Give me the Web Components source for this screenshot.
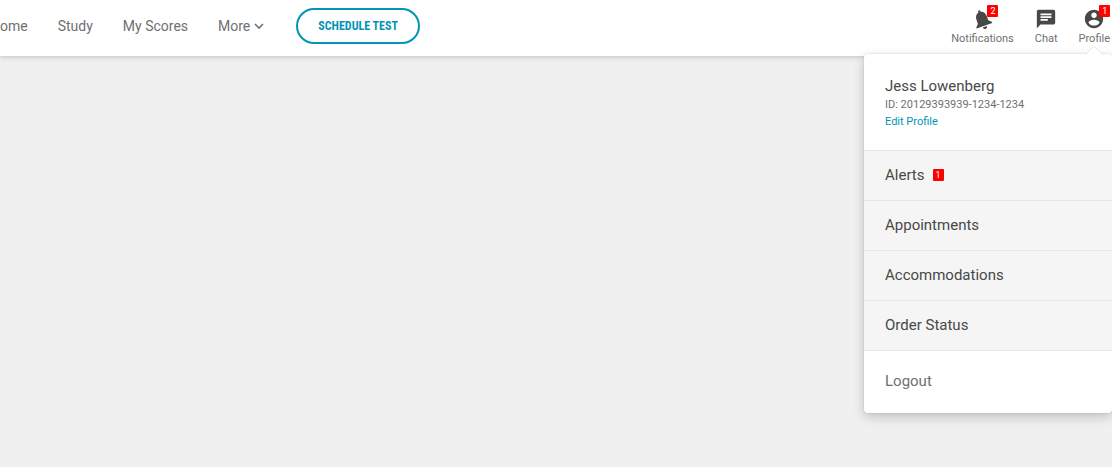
<!DOCTYPE html>
<html lang="en">
<head>
<meta charset="utf-8">
<meta name="viewport" content="width=device-width, initial-scale=1">
<title>My Account</title>
<style>
  body {
    margin: 0;
    min-height: 100vh;
    overflow-x: hidden;
    background: #f0f0f0;
    color: #707070;
    font-family: Roboto, "Liberation Sans", sans-serif;
  }
</style>
</head>
<body>
<site-header>
  <nav-link href="#home">Home</nav-link>
  <nav-link href="#study">Study</nav-link>
  <nav-link href="#scores">My Scores</nav-link>
  <nav-more>More</nav-more>
  <pill-button>Schedule Test</pill-button>

  <header-action slot="actions" icon="bell" count="2">Notifications</header-action>
  <header-action slot="actions" icon="chat">Chat</header-action>
  <header-action slot="actions" icon="person" count="1">Profile</header-action>

  <profile-menu slot="menu" name="Jess Lowenberg" user-id="20129393939-1234-1234">
    <menu-item href="#alerts" count="1">Alerts</menu-item>
    <menu-item href="#appointments">Appointments</menu-item>
    <menu-item href="#accommodations">Accommodations</menu-item>
    <menu-item href="#orders">Order Status</menu-item>
    <a slot="footer" href="#logout">Logout</a>
  </profile-menu>
</site-header>

<script>
const icons = {
  bell: `<g transform="rotate(-20 12 12)"><path d="M12 23.500a2.400 2.400 0 0 0 2.400-2.400H9.600a2.400 2.400 0 0 0 2.400 2.400zM18 15.500V11c0-3.500-1.700-6.200-4.700-6.900V3.300a1.300 1.300 0 0 0-2.600 0v.8C7.700 4.800 6 7.500 6 11v4.500l-3 3v1.300h18v-1.300z"/></g>`,
  chat: `<path d="M20 2H4c-1.100 0-2 .9-2 2v18l4-4h14c1.100 0 2-.9 2-2V4c0-1.100-.9-2-2-2zM6 9h12v2H6V9zm8 5H6v-2h8v2zm4-6H6V6h12v2z"/>`,
  person: `<path d="M12 2C6.480 2 2 6.480 2 12s4.480 10 10 10 10-4.480 10-10S17.520 2 12 2zm0 3c1.660 0 3 1.340 3 3s-1.340 3-3 3-3-1.340-3-3 1.340-3 3-3zm0 14.200c-2.500 0-4.710-1.280-6-3.220.03-1.990 4-3.080 6-3.080 1.990 0 5.970 1.090 6 3.080-1.290 1.940-3.500 3.220-6 3.220z"/>`
};

class SiteHeader extends HTMLElement {
  constructor() {
    super();
    this.attachShadow({mode: 'open'}).innerHTML = `
      <style>
        :host { display: block; position: relative; }

        header {
          display: flex;
          align-items: center;
          justify-content: space-between;
          height: 56px;
          background: #fff;
          box-shadow: 0 1px 5px rgba(0, 0, 0, .2);
        }

        nav {
          display: flex;
          align-items: center;
          gap: 30px;
          /* the bar runs on past the left edge of the window */
          margin-left: -10px;
          padding-bottom: 4px;
        }

        .actions {
          display: flex;
          gap: 21px;
          padding: 0 2px 3px 0;
        }
      </style>
      <header>
        <nav><slot></slot></nav>
        <div class="actions"><slot name="actions"></slot></div>
      </header>
      <slot name="menu"></slot>
    `;
  }
}

class NavLink extends HTMLElement {
  constructor() {
    super();
    this.attachShadow({mode: 'open'}).innerHTML = `
      <style>
        :host { display: block; font-size: 14px; line-height: 20px; }
        a { color: inherit; text-decoration: none; white-space: nowrap; }
      </style>
      <a><slot></slot></a>
    `;
  }

  connectedCallback() {
    this.shadowRoot.querySelector('a').href = this.getAttribute('href');
  }
}

class NavMore extends HTMLElement {
  constructor() {
    super();
    this.attachShadow({mode: 'open'}).innerHTML = `
      <style>
        :host { display: block; }

        button {
          display: flex;
          align-items: center;
          gap: 4px;
          padding: 0;
          border: none;
          background: none;
          color: inherit;
          font: inherit;
          font-size: 14px;
          line-height: 20px;
          cursor: pointer;
        }
      </style>
      <button type="button" aria-haspopup="true">
        <slot></slot>
        <svg width="10" height="8" viewBox="0 0 10 8" aria-hidden="true">
          <path d="M1 2l4 4 4-4" fill="none" stroke="currentColor" stroke-width="1.600"/>
        </svg>
      </button>
    `;
  }
}

class PillButton extends HTMLElement {
  constructor() {
    super();
    this.attachShadow({mode: 'open'}).innerHTML = `
      <style>
        :host { display: block; margin-left: 2px; }

        button {
          height: 36px;
          padding: 0 20px;
          border: 2px solid #0095b6;
          border-radius: 18px;
          background: #fff;
          color: #0095b6;
          font: bold 12px/16px "Roboto Condensed", "Liberation Sans Narrow", Roboto, sans-serif;
          text-transform: uppercase;
          white-space: nowrap;
          cursor: pointer;
        }
      </style>
      <button type="button"><slot></slot></button>
    `;
  }
}

class CountBadge extends HTMLElement {
  constructor() {
    super();
    this.attachShadow({mode: 'open'}).innerHTML = `
      <style>
        :host {
          display: block;
          min-width: 11px;
          border-radius: 1px;
          background: #f00;
          color: #fff;
          font-size: 9px;
          line-height: 12px;
          text-align: center;
        }
      </style>
      <slot></slot>
    `;
  }
}

class HeaderAction extends HTMLElement {
  constructor() {
    super();
    this.attachShadow({mode: 'open'}).innerHTML = `
      <style>
        :host { display: block; }

        button {
          display: flex;
          flex-direction: column;
          align-items: center;
          gap: 2px;
          padding: 0;
          border: none;
          background: none;
          color: inherit;
          font: inherit;
          font-size: 11px;
          line-height: 14px;
          cursor: pointer;
        }

        .icon { position: relative; height: 22px; }
        svg { display: block; fill: #484848; }
        count-badge { position: absolute; top: -3px; right: -5px; }
      </style>
      <button type="button">
        <span class="icon"></span>
        <slot></slot>
      </button>
    `;
  }

  connectedCallback() {
    const count = this.getAttribute('count');
    this.shadowRoot.querySelector('.icon').innerHTML = `
      <svg width="22" height="22" viewBox="0 0 24 24" aria-hidden="true">${icons[this.getAttribute('icon')]}</svg>
      ${count ? `<count-badge>${count}</count-badge>` : ''}
    `;
  }
}

class ProfileMenu extends HTMLElement {
  constructor() {
    super();
    this.attachShadow({mode: 'open'}).innerHTML = `
      <style>
        :host {
          display: block;
          position: absolute;
          top: 54px;
          right: 0;
          width: 248px;
          border-radius: 4px;
          background: #fff;
          box-shadow: 0 0 2px rgba(0, 0, 0, .15), 0 4px 12px rgba(0, 0, 0, .2);
        }

        .arrow {
          position: absolute;
          top: -8px;
          right: 9px;
          display: block;
        }

        .user { padding: 22px 21px 20px; }
        .name { color: #484848; font-size: 15px; line-height: 20px; }
        .id { font-size: 11px; line-height: 18px; }

        .edit {
          display: block;
          width: fit-content;
          color: #0095b6;
          font-size: 11px;
          line-height: 16px;
          text-decoration: none;
        }

        footer { padding: 20px 21px 22px; border-top: 1px solid #e6e6e6; }

        ::slotted(a) {
          display: block;
          color: inherit;
          font-size: 15px;
          line-height: 20px;
          text-decoration: none;
        }
      </style>
      <svg class="arrow" width="18" height="9" viewBox="0 0 18 9" aria-hidden="true">
        <path d="M0 9l8-8q1-1 2 0l8 8" fill="#fff" stroke="#e6e6e6"/>
      </svg>
      <div class="user">
        <div class="name"></div>
        <div class="id"></div>
        <a class="edit" href="#edit">Edit Profile</a>
      </div>
      <slot></slot>
      <footer><slot name="footer"></slot></footer>
    `;
  }

  connectedCallback() {
    this.shadowRoot.querySelector('.name').textContent = this.getAttribute('name');
    this.shadowRoot.querySelector('.id').textContent = 'ID: ' + this.getAttribute('user-id');
  }
}

class MenuItem extends HTMLElement {
  constructor() {
    super();
    this.attachShadow({mode: 'open'}).innerHTML = `
      <style>
        :host { display: block; }

        a {
          display: flex;
          align-items: center;
          gap: 8px;
          padding: 14px 21px 15px;
          border-top: 1px solid #e6e6e6;
          background: #f5f5f5;
          color: #484848;
          font-size: 15px;
          line-height: 20px;
          text-decoration: none;
        }
      </style>
      <a><slot></slot></a>
    `;
  }

  connectedCallback() {
    const link = this.shadowRoot.querySelector('a');
    link.href = this.getAttribute('href');
    if (this.hasAttribute('count')) {
      const badge = document.createElement('count-badge');
      badge.textContent = this.getAttribute('count');
      link.appendChild(badge);
    }
  }
}

customElements.define('count-badge', CountBadge);
customElements.define('nav-link', NavLink);
customElements.define('nav-more', NavMore);
customElements.define('pill-button', PillButton);
customElements.define('header-action', HeaderAction);
customElements.define('menu-item', MenuItem);
customElements.define('profile-menu', ProfileMenu);
customElements.define('site-header', SiteHeader);
</script>
</body>
</html>
